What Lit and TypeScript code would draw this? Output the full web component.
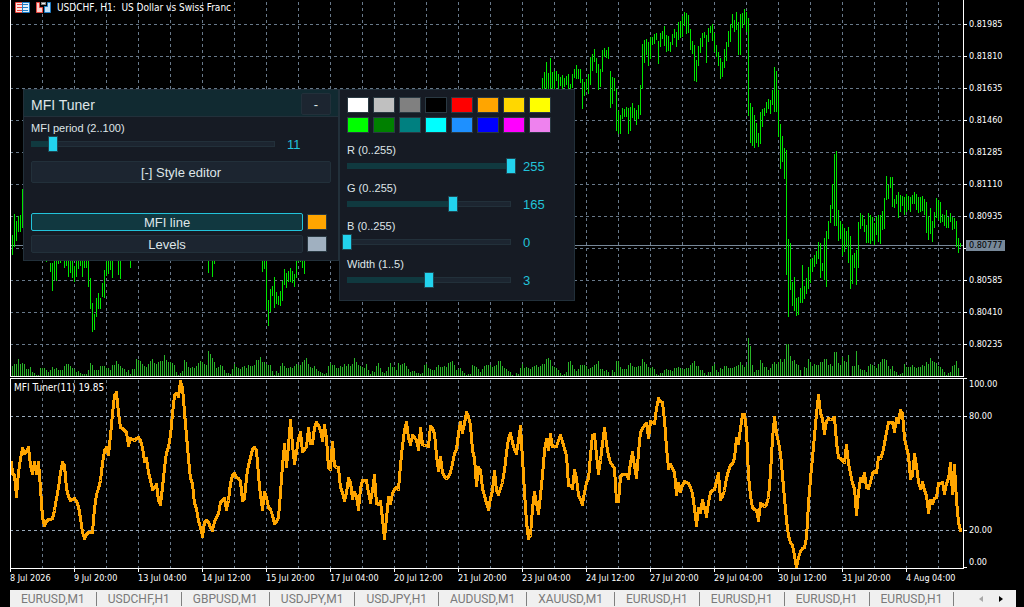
import { LitElement, html, svg, css } from "lit";
import { customElement, property, state } from "lit/decorators.js";

type Bar = [number, number];

// Runs of price bars: first x, then [high, low] for every second pixel.
const PRICE_RUNS: { x: number; bars: Bar[] }[] = [
  { x: 12, bars: [[235, 255], [214, 247], [221, 241], [216, 232], [215, 232], [189, 228]] },
  {
    x: 46,
    bars: [
      [255, 262], [255, 260], [263, 272], [263, 291], [255, 280], [261, 281], [255, 264], [255, 263], [255, 260],
      [255, 268], [255, 266], [255, 277], [255, 273], [255, 278], [266, 282], [255, 277], [255, 269], [255, 266],
      [255, 277], [255, 268], [255, 268], [255, 287], [278, 309], [303, 332], [314, 330], [298, 317], [293, 309],
      [298, 309], [283, 297], [270, 298], [255, 276], [255, 274], [255, 270], [255, 278],
    ],
  },
  { x: 118, bars: [[255, 275], [255, 279]] },
  { x: 130, bars: [[255, 268]] },
  { x: 208, bars: [[255, 273], [255, 260], [255, 277], [255, 264]] },
  {
    x: 262,
    bars: [
      [255, 272], [255, 269], [255, 310], [300, 326], [289, 312], [286, 296], [277, 308], [292, 304], [296, 305],
      [291, 306], [281, 301], [269, 285], [273, 288], [271, 282], [268, 282], [271, 283], [274, 287], [255, 278],
      [255, 262], [255, 262], [255, 268], [255, 274],
    ],
  },
  {
    x: 542,
    bars: [
      [78, 90], [72, 90], [62, 90], [73, 90], [58, 90], [72, 90], [71, 90], [71, 81], [74, 89], [77, 86], [75, 89],
      [78, 87], [76, 85], [74, 89], [84, 89], [74, 88], [69, 78], [65, 79], [69, 79], [69, 83], [79, 109], [82, 96],
      [79, 90], [74, 94], [57, 85], [54, 71], [49, 62], [58, 73], [64, 90], [69, 87], [50, 72], [48, 57], [50, 58],
      [47, 59], [71, 108], [77, 104], [78, 91], [89, 131], [111, 134], [115, 134], [108, 119], [109, 117],
      [107, 117], [108, 134], [107, 131], [103, 118], [108, 120], [110, 125], [105, 119], [85, 115], [44, 89],
      [40, 63], [39, 55], [42, 66], [37, 59], [37, 45], [34, 44], [33, 40], [41, 64], [33, 47], [31, 39], [26, 46],
      [35, 52], [36, 51], [42, 52], [34, 45], [29, 38], [32, 47], [22, 40], [21, 38], [16, 37], [12, 26], [13, 34],
      [15, 33], [29, 50], [41, 54], [45, 81], [60, 82], [46, 66], [38, 53], [33, 47], [32, 38], [35, 63], [28, 42],
      [26, 33], [24, 41], [33, 52], [45, 57], [52, 66], [58, 79], [62, 77], [49, 68], [42, 61], [31, 47], [24, 42],
      [14, 28], [20, 32], [12, 30], [22, 55], [14, 55], [13, 28], [9, 25], [12, 32], [18, 116], [103, 143],
      [107, 146], [115, 148], [123, 143], [133, 147], [112, 144], [109, 127], [108, 116], [102, 113], [99, 109],
      [100, 114], [90, 105], [67, 112], [71, 112], [90, 137], [124, 169], [136, 162], [148, 179], [150, 275],
      [239, 317], [243, 290], [282, 306], [277, 311], [298, 316], [297, 315], [288, 303], [265, 303], [286, 299],
      [278, 294], [267, 289], [259, 283], [258, 272], [255, 267], [251, 264], [242, 259], [243, 278], [263, 271],
      [238, 280], [231, 287], [221, 239], [205, 223], [184, 209], [154, 226], [151, 226], [210, 241], [221, 239],
      [224, 256], [228, 252], [231, 247], [227, 263], [236, 289], [255, 284], [253, 268], [250, 285], [222, 268],
      [213, 229], [215, 226], [219, 232], [225, 243], [213, 243], [215, 244], [217, 241], [223, 245], [217, 235],
      [215, 242], [215, 244], [211, 230], [198, 229], [176, 200], [185, 199], [177, 188], [177, 207], [199, 208],
      [195, 204], [192, 218], [195, 212], [196, 206], [197, 215], [194, 212], [196, 210], [197, 212], [195, 204],
      [192, 204], [194, 210], [197, 213], [197, 212], [196, 211], [199, 215], [202, 233], [216, 240], [208, 234],
      [221, 242], [212, 228], [198, 218], [200, 220], [202, 223], [214, 222], [215, 226], [210, 228], [217, 228],
      [213, 222], [217, 230], [218, 229], [221, 247], [238, 253], [243, 247],
    ],
  },
];

// Tick volume heights, one for every second pixel.
const VOLUME_RUNS: { x: number; heights: number[] }[] = [
  {
    x: 12,
    heights: [
      10, 12, 12, 17, 12, 13, 12, 7, 7, 9, 4, 3, 1, 1, 8, 8, 8, 6, 4, 6, 9, 7, 8, 6, 6, 6, 10, 12, 12, 10, 8, 7, 4, 5,
      3, 2, 2, 2, 6, 13, 11, 6, 6, 6, 10, 10, 10, 8, 8, 6, 11, 11, 15, 12, 10, 8, 7, 4, 6, 2, 7, 7, 17, 16, 15, 12,
      10, 9, 12, 15, 17, 13, 12, 14, 15, 15, 21, 16, 14, 14, 13, 11, 4, 1, 3, 5, 16, 14, 9, 8, 9, 8, 10, 13, 15, 14,
      12, 11, 25, 22, 18, 14, 8, 9, 11, 10, 6, 3, 3, 2, 7, 12, 9, 8, 7, 9, 10, 8, 11, 10, 10, 11, 16, 16, 19, 14, 14,
      12, 11, 11, 5, 1, 5, 3, 10, 13, 10, 8, 8, 9, 8, 10, 12, 11, 11, 14, 16, 18, 12, 9, 8, 10, 7, 5, 4, 3, 2, 3, 10,
    ],
  },
  {
    x: 330,
    heights: [
      13, 11, 11, 8, 8, 10, 9, 12, 10, 12, 10, 12, 18, 14, 11, 10, 9, 8, 12, 6, 2, 5, 4, 10, 13, 8, 4, 3, 5, 9, 13, 9,
      9, 6, 13, 11, 12, 13, 10, 7, 4, 5, 5, 3, 3, 2, 3, 11, 12, 8, 7, 6, 6, 9, 11, 9, 9, 10, 9, 13, 14, 15, 11, 6, 7,
      8, 5, 3, 1, 2, 2, 11, 10, 9, 7, 4, 7, 10, 11, 11, 11, 9, 10, 11, 15, 15, 10, 8, 7, 5, 4, 1, 0, 3, 2, 8, 12, 8,
      9, 8, 7, 9, 10, 11, 9, 10, 12, 12, 17, 18, 16, 10, 9, 8, 6, 3, 1, 2, 4, 14, 15, 11, 7, 5, 7, 11, 11, 11, 10, 7,
      8, 9, 11, 12, 15, 7, 7, 5, 6, 4, 0, 6, 4, 15, 15, 9, 7, 7, 7, 11, 13, 10, 9, 9, 10, 10, 17, 14, 12, 9, 8, 9, 7,
      2, 1, 3, 3, 6, 7, 6, 6, 5, 8, 8, 9, 8, 7, 7, 8, 8, 11, 13, 15, 10, 10, 6, 6, 3, 1, 4, 4, 10, 12, 6, 4, 8, 7, 10,
      10, 8, 8, 8, 9, 10, 11, 14, 11, 9, 11, 38, 30, 11, 4, 6, 6,
    ],
  },
  {
    x: 760,
    heights: [
      16, 13, 9, 9, 6, 8, 12, 14, 12, 14, 17, 14, 17, 32, 32, 20, 15, 16, 12, 11, 6, 0, 9, 8, 17, 14, 10, 12, 11, 11,
      14, 14, 17, 17, 11, 12, 10, 24, 24, 13, 11, 19, 15, 14, 21, 0, 10, 10, 25, 11, 7, 6, 6, 4, 10, 12, 11, 10, 8,
      12, 14, 17, 17, 16, 10, 7, 10, 5, 4, 1, 2, 3, 12, 9, 9, 9, 11, 9, 8, 9, 9, 11, 10, 14, 12, 18, 15, 14, 13, 10,
      9, 7, 4, 1, 3, 4, 10, 11, 15, 8,
    ],
  },
];

// Indicator line, window y for every second pixel from x = 12.
const MFI_LINE: number[] = [
  473, 475, 496, 472, 458, 448, 453, 451, 447, 465, 473, 462, 473, 462, 488, 517, 525, 521, 519, 519, 518, 510, 498,
  487, 472, 462, 465, 488, 496, 500, 499, 498, 501, 506, 518, 532, 538, 534, 532, 532, 532, 508, 494, 488, 480, 463,
  450, 447, 454, 435, 413, 395, 392, 413, 427, 428, 430, 432, 445, 438, 439, 440, 438, 437, 440, 447, 461, 458, 472,
  480, 489, 487, 484, 500, 504, 487, 468, 452, 447, 435, 413, 395, 393, 396, 381, 387, 412, 435, 458, 478, 483, 503,
  508, 520, 527, 536, 522, 520, 522, 527, 530, 521, 517, 513, 502, 500, 498, 509, 500, 483, 475, 473, 477, 478, 481,
  500, 498, 477, 465, 457, 449, 447, 450, 475, 495, 509, 492, 497, 507, 509, 515, 523, 521, 517, 492, 465, 444, 466,
  445, 420, 445, 463, 452, 438, 432, 451, 449, 446, 428, 443, 443, 427, 422, 425, 430, 440, 425, 438, 467, 469, 442,
  465, 467, 467, 487, 492, 500, 492, 478, 482, 498, 492, 496, 509, 488, 480, 480, 480, 492, 502, 490, 475, 503, 504,
  501, 518, 538, 518, 497, 503, 493, 489, 487, 489, 465, 445, 430, 422, 437, 444, 435, 437, 440, 449, 428, 444, 445,
  445, 446, 426, 428, 433, 455, 470, 457, 472, 476, 478, 476, 472, 463, 453, 449, 433, 422, 432, 423, 412, 416, 425,
  450, 458, 485, 467, 470, 488, 495, 503, 509, 498, 490, 471, 490, 494, 488, 482, 470, 452, 438, 433, 442, 449, 453,
  440, 426, 458, 492, 522, 538, 535, 508, 492, 503, 513, 495, 475, 450, 439, 449, 434, 446, 446, 446, 440, 435, 441,
  448, 455, 485, 485, 488, 470, 478, 495, 499, 504, 492, 482, 478, 455, 435, 434, 455, 473, 460, 443, 428, 443, 455,
  462, 465, 468, 501, 501, 476, 474, 474, 474, 478, 462, 452, 466, 477, 452, 432, 428, 425, 423, 437, 421, 422, 423,
  408, 398, 401, 402, 420, 447, 468, 464, 468, 472, 494, 483, 491, 485, 481, 482, 483, 487, 493, 508, 525, 508, 512,
  500, 507, 516, 502, 492, 490, 489, 481, 473, 499, 496, 490, 478, 470, 465, 463, 458, 438, 443, 428, 414, 414, 430,
  475, 495, 507, 509, 510, 520, 503, 504, 506, 504, 497, 473, 438, 417, 433, 442, 453, 475, 498, 520, 535, 542, 545,
  555, 567, 557, 551, 548, 547, 537, 503, 478, 457, 435, 413, 395, 413, 418, 433, 421, 418, 419, 419, 417, 442, 457,
  458, 460, 462, 445, 463, 473, 483, 488, 514, 492, 478, 481, 473, 487, 488, 482, 473, 471, 472, 457, 458, 453, 443,
  432, 422, 422, 422, 431, 418, 422, 410, 413, 438, 447, 455, 478, 475, 454, 465, 482, 488, 482, 490, 495, 512, 500,
  503, 498, 497, 483, 483, 482, 493, 483, 478, 463, 493, 465, 500, 522, 530,
];

const PRICES = [
  "0.81985", "0.81810", "0.81635", "0.81460", "0.81285", "0.81110", "0.80935", "0.80760", "0.80585", "0.80410",
  "0.80235",
];

const TIMES = [
  "8 Jul 2026", "9 Jul 20:00", "13 Jul 04:00", "14 Jul 12:00", "15 Jul 20:00", "17 Jul 04:00", "20 Jul 12:00",
  "21 Jul 20:00", "23 Jul 04:00", "24 Jul 12:00", "27 Jul 20:00", "29 Jul 04:00", "30 Jul 12:00", "31 Jul 20:00",
  "4 Aug 04:00",
];

const TABS = [
  "EURUSD,M1", "USDCHF,H1", "GBPUSD,M1", "USDJPY,M1", "USDJPY,H1", "AUDUSD,M1", "XAUUSD,M1", "EURUSD,H1",
  "EURUSD,H1", "EURUSD,H1", "EURUSD,H1",
];

const PALETTE: [string, string][] = [
  ["White", "#ffffff"], ["Silver", "#c0c0c0"], ["Gray", "#808080"], ["Black", "#000000"],
  ["Red", "#ff0000"], ["Orange", "#ffa500"], ["Gold", "#ffd700"], ["Yellow", "#ffff00"],
  ["Lime", "#00ff00"], ["Green", "#008000"], ["Teal", "#008080"], ["Aqua", "#00ffff"],
  ["Dodger blue", "#1e90ff"], ["Blue", "#0000ff"], ["Magenta", "#ff00ff"], ["Violet", "#ee82ee"],
];

const columns = Array.from({ length: 80 }, (_, i) => 31.5 + i * 32);

@customElement("price-pane")
export class PricePane extends LitElement {
  static styles = css`
    :host {
      display: block;
      position: relative;
      overflow: hidden;
      border: 1px solid #fff;
      border-top: 0;
      min-width: 0;
    }
    .plot {
      display: block;
      width: 100%;
      height: 100%;
      shape-rendering: crispEdges;
    }
    .grid { stroke: #68798a; stroke-dasharray: 3 3; }
    .rows { stroke-dashoffset: 1; }
    .columns { stroke-dashoffset: -2; }
    .bid { stroke: #778899; }
    .bars { stroke: #00e600; fill: none; }
    .volumes { stroke: #28b428; fill: none; }
    .title {
      position: absolute;
      left: 4px;
      top: 1px;
      display: flex;
      align-items: center;
      gap: 6px;
      margin: 0;
      font: 10px/13px "DejaVu Sans Condensed", "DejaVu Sans", sans-serif;
      color: #fff;
      white-space: pre;
    }
  `;

  render() {
    const bars = PRICE_RUNS.flatMap((run) => run.bars.map(([hi, lo], i) => `M${run.x + i * 2} ${hi}V${lo}`)).join("");
    const volumes = VOLUME_RUNS.flatMap((run) =>
      run.heights.map((h, i) => `M${run.x + i * 2} 376V${376 - h}`)
    ).join("");
    return html`
      <svg class="plot" role="img" aria-label="USDCHF hourly price bars">
        <g class="grid columns">${columns.map((x) => svg`<line x1=${x} x2=${x} y1="0" y2="100%"></line>`)}</g>
        <g class="grid rows">
          ${PRICES.map((_, i) => svg`<line x1="0" x2="100%" y1=${24.5 + i * 32} y2=${24.5 + i * 32}></line>`)}
        </g>
        <path class="volumes" transform="translate(-10.5 0)" d=${volumes}></path>
        <line class="bid" x1="0" x2="100%" y1="245.5" y2="245.5"></line>
        <path class="bars" transform="translate(-10.5 0)" d=${bars}></path>
      </svg>
      <h1 class="title">
        <svg width="15" height="11" viewBox="0 0 15 11" aria-hidden="true">
          <path d="M8 0H1a1 1 0 0 0-1 1v9a1 1 0 0 0 1 1h7z" fill="#e8463e" />
          <path d="M7 0h7a1 1 0 0 1 1 1v9a1 1 0 0 1-1 1H7z" fill="#1e7cc4" />
          <rect x="1" y="1" width="6" height="9" fill="#fde4e0" />
          <rect x="8" y="1" width="6" height="9" fill="#dff0fd" />
          <path d="M2 2.5h5M2 5.5h5M2 8.5h5" stroke="#e8463e" />
          <path d="M8 2.5h5M8 5.5h5M8 8.5h5" stroke="#1e7cc4" />
        </svg>
        <svg width="15" height="11" viewBox="0 0 15 11" aria-hidden="true">
          <path d="M.5 .5h3v5h3v5h-6z" fill="#fbd0cb" stroke="#e8463e" />
          <path d="M14.500 .5h-3v4h-3v6h6z" fill="#bfe2fb" stroke="#1e7cc4" />
          <path d="M5 0h5v3h-5z" fill="#8a8a8a" />
          <path d="M6 1h3v1h-3z" fill="#f0f0f0" />
        </svg><span>USDCHF, H1:  US Dollar vs Swiss Franc</span>
      </h1>
    `;
  }
}

@customElement("mfi-pane")
export class MfiPane extends LitElement {
  @property() color = "#ffa500";
  @property({ type: Number }) weight = 3;
  @property({ type: Number }) period = 11;

  static styles = css`
    :host {
      display: block;
      position: relative;
      overflow: hidden;
      border: 1px solid #fff;
      min-width: 0;
    }
    .plot {
      display: block;
      width: 100%;
      height: 100%;
      shape-rendering: crispEdges;
    }
    .grid { stroke: #68798a; stroke-dasharray: 3 3; stroke-dashoffset: -1; }
    .levels { stroke: #9aaabb; stroke-dasharray: 3 3; stroke-dashoffset: 1; }
    .line { fill: none; stroke-linejoin: round; stroke-linecap: round; }
    .title {
      position: absolute;
      left: 3px;
      top: 2px;
      margin: 0;
      font: 10px/13px "DejaVu Sans Condensed", "DejaVu Sans", sans-serif;
      color: #fff;
    }
  `;

  render() {
    const points = MFI_LINE.map((y, i) => `${12 + i * 2},${y}`).join(" ");
    return html`
      <svg class="plot" role="img" aria-label="Money flow index line">
        <g class="grid">${columns.map((x) => svg`<line x1=${x} x2=${x} y1="0" y2="100%"></line>`)}</g>
        <g class="levels">
          <line x1="0" x2="100%" y1="37.5" y2="37.5"></line>
          <line x1="0" x2="100%" y1="151.5" y2="151.5"></line>
        </g>
        <polyline
          class="line"
          transform="translate(-10.5 -378.5)"
          stroke=${this.color}
          stroke-width=${this.weight}
          points=${"11,462 " + points}
        ></polyline>
      </svg>
      <h2 class="title">MFI Tuner(${this.period}) 19.85</h2>
    `;
  }
}

@customElement("value-slider")
export class ValueSlider extends LitElement {
  @property() label = "";
  @property({ type: Number }) min = 0;
  @property({ type: Number }) max = 255;
  @property({ type: Number }) value = 0;

  static styles = css`
    :host { display: block; }
    .label {
      display: block;
      font-size: 11px;
      line-height: 14px;
      color: #dfe5e8;
    }
    .row {
      display: grid;
      grid-template-columns: minmax(0, 1fr) 44px;
      column-gap: 12px;
      height: 16px;
    }
    .slider { display: grid; align-items: center; }
    .rail, .input { grid-area: 1 / 1; }
    .rail {
      height: 6px;
      background: #1c2530;
      box-shadow: inset 0 0 0 1px #22303a;
    }
    .fill { height: 6px; background: #10393f; }
    .input {
      appearance: none;
      height: 16px;
      margin: 0 -5px;
      padding: 0;
      background: none;
      outline-offset: 2px;
      z-index: 1;
    }
    .input::-webkit-slider-thumb {
      appearance: none;
      box-sizing: border-box;
      width: 10px;
      height: 16px;
      border: 1px solid #1f4753;
      background: #22d3ee;
    }
    .value {
      padding-top: 2px;
      font-size: 13px;
      line-height: 16px;
      color: #22c3da;
    }
  `;

  private onInput(e: Event) {
    this.value = Number((e.target as HTMLInputElement).value);
    this.dispatchEvent(new CustomEvent("change-value", { detail: this.value }));
  }

  render() {
    const share = ((this.value - this.min) / (this.max - this.min)) * 100;
    return html`
      <label class="label" for="range">${this.label} (${this.min}..${this.max})</label>
      <div class="row">
        <div class="slider">
          <div class="rail"><div class="fill" style="width:${share}%"></div></div>
          <input
            class="input"
            id="range"
            type="range"
            min=${this.min}
            max=${this.max}
            .value=${String(this.value)}
            @input=${this.onInput}
          />
        </div>
        <output class="value" for="range">${this.value}</output>
      </div>
    `;
  }
}

@customElement("app-root")
export class AppRoot extends LitElement {
  @state() private period = 11;
  @state() private target = "line";
  @state() private styleOpen = true;
  @state() private collapsed = false;
  @state() private rgb = [255, 165, 0];
  @state() private weight = 3;

  static styles = css`
    :host {
      display: block;
      font-family: "Liberation Sans", Arial, sans-serif;
      background: #000;
    }
    .terminal {
      position: relative;
      display: grid;
      box-sizing: border-box;
      height: 100vh;
      padding-left: 10px;
      grid-template-columns: minmax(0, 1fr) 60px;
      grid-template-rows: minmax(0, 1fr) 191px 21px 17px;
      overflow: hidden;
      color: #fff;
    }
    .price, .prices { margin-bottom: 1px; }
    .prices, .levels, .times {
      font: 9px/12px "DejaVu Sans Condensed", "DejaVu Sans", sans-serif;
    }
    .prices {
      position: relative;
      padding-top: 8px;
    }
    .tick {
      display: flex;
      align-items: center;
      gap: 2px;
    }
    .tick::before {
      content: "";
      width: 3px;
      height: 1px;
      background: #fff;
    }
    .prices .tick { height: 32px; }
    .last {
      position: absolute;
      left: 2px;
      top: 240px;
      box-sizing: border-box;
      width: 39px;
      padding-left: 3px;
      line-height: 11px;
      background: #778899;
      color: #000;
    }
    .levels {
      display: grid;
      grid-template-rows: 32px 12px 102px 12px 32px;
    }
    .plain {
      padding-left: 5px;
      background: linear-gradient(#fff, #fff) 0 0 / 3px 1px no-repeat;
    }
    .low {
      align-self: end;
      background-position: 0 100%;
    }
    .times {
      grid-column: 1 / -1;
      display: flex;
      overflow: hidden;
    }
    .time {
      flex: none;
      width: 64px;
      display: flex;
      flex-direction: column;
      white-space: nowrap;
    }
    .time::before {
      content: "";
      width: 1px;
      height: 3px;
      background: #fff;
    }
    .tabs {
      grid-column: 1 / -1;
      display: flex;
      align-items: center;
      margin-right: 8px;
      background: #f0f0f0;
      overflow: hidden;
    }
    .tab {
      flex: none;
      height: 14px;
      padding: 0 11px;
      border: 0;
      border-right: 1px solid #808080;
      background: none;
      font: 12px/14px Roboto, sans-serif;
      color: #7a7a7a;
    }
    .scroll {
      display: flex;
      margin-left: auto;
      padding-right: 5px;
    }
    .arrow {
      display: grid;
      place-items: center;
      width: 20px;
      height: 16px;
      padding: 0;
      border: 0;
      background: none;
    }

    .floating {
      position: absolute;
      left: 23px;
      top: 89px;
      display: flex;
      align-items: flex-start;
      color: #dfe5e8;
    }
    .panel {
      box-sizing: border-box;
      border: 1px solid #22303a;
      background: #161b24;
    }
    .tuner { width: 316px; }
    .head {
      display: flex;
      align-items: center;
      justify-content: space-between;
      padding: 3px 7px 1px;
      border-bottom: 1px solid #22303a;
      background: #112a31;
    }
    .name {
      margin: 0;
      padding-top: 2px;
      font-size: 14px;
      line-height: 16px;
      font-weight: 400;
    }
    .button {
      box-sizing: border-box;
      height: 22px;
      padding: 2px 0 0;
      border: 1px solid #22303a;
      border-radius: 2px;
      background: #1c2530;
      font: 13px/16px "Liberation Sans", Arial, sans-serif;
      color: #dfe5e8;
    }
    .fold { width: 30px; }
    .body { padding: 4px 7px 7px; }
    .wide {
      display: block;
      width: 100%;
      margin: 10px 0 30px;
    }
    .targets {
      display: grid;
      grid-template-columns: minmax(0, 1fr) 20px;
      column-gap: 4px;
      row-gap: 4px;
      align-items: center;
      padding-right: 4px;
    }
    .target {
      height: 18px;
      line-height: 14px;
    }
    .active {
      border-color: #22c3da;
      background: #113840;
    }
    .swatch {
      box-sizing: border-box;
      height: 16px;
      padding: 0;
      border: 1px solid #2a3942;
    }
    .editor {
      width: 236px;
      padding: 7px 7px 13px;
    }
    .palette {
      display: grid;
      grid-template-columns: repeat(8, 22px);
      gap: 4px;
      margin-bottom: 10px;
    }
    .channels { display: grid; gap: 8px; }
  `;

  private pick(hex: string) {
    this.rgb = [1, 3, 5].map((i) => parseInt(hex.slice(i, i + 2), 16));
  }

  private setChannel(index: number, value: number) {
    this.rgb = this.rgb.map((v, i) => (i === index ? value : v));
  }

  private renderEditor() {
    return html`
      <section class="panel editor" aria-label="Style">
        <div class="palette">
          ${PALETTE.map(
            ([name, hex]) => html`<button
              class="swatch"
              aria-label=${name}
              style="background:${hex}"
              @click=${() => this.pick(hex)}
            ></button>`
          )}
        </div>
        <div class="channels">
          ${["R", "G", "B"].map(
            (name, i) => html`<value-slider
              label=${name}
              .value=${this.rgb[i]}
              @change-value=${(e: CustomEvent) => this.setChannel(i, e.detail)}
            ></value-slider>`
          )}
          <value-slider
            label="Width"
            min="1"
            max="5"
            .value=${this.weight}
            @change-value=${(e: CustomEvent) => (this.weight = e.detail)}
          ></value-slider>
        </div>
      </section>
    `;
  }

  render() {
    const color = `rgb(${this.rgb.join(",")})`;
    return html`
      <main class="terminal">
        <price-pane class="price"></price-pane>
        <div class="prices">
          ${PRICES.map((p) => html`<div class="tick">${p}</div>`)}
          <div class="last">0.80777</div>
        </div>

        <mfi-pane .color=${color} .weight=${this.weight} .period=${this.period}></mfi-pane>
        <div class="levels">
          <div class="plain">100.00</div>
          <div class="tick">80.00</div>
          <div></div>
          <div class="tick">20.00</div>
          <div class="plain low">0.00</div>
        </div>

        <div class="times">${TIMES.map((t) => html`<span class="time">${t}</span>`)}</div>

        <nav class="tabs" aria-label="Charts">
          ${TABS.map((t) => html`<button class="tab">${t}</button>`)}
          <div class="scroll">
            <button class="arrow" aria-label="Previous tabs" disabled>
              <svg width="4" height="6" viewBox="0 0 4 6"><path d="M4 0v6L0 3z" fill="#a8a8a8" /></svg>
            </button>
            <button class="arrow" aria-label="Next tabs">
              <svg width="4" height="6" viewBox="0 0 4 6"><path d="M0 0v6L4 3z" fill="#000" /></svg>
            </button>
          </div>
        </nav>

        <div class="floating">
          <section class="panel tuner" aria-label="MFI Tuner">
            <header class="head">
              <h2 class="name">MFI Tuner</h2>
              <button class="button fold" @click=${() => (this.collapsed = !this.collapsed)}>
                ${this.collapsed ? "+" : "-"}
              </button>
            </header>
            ${this.collapsed
              ? null
              : html`<div class="body">
                  <value-slider
                    label="MFI period"
                    min="2"
                    max="100"
                    .value=${this.period}
                    @change-value=${(e: CustomEvent) => (this.period = e.detail)}
                  ></value-slider>
                  <button class="button wide" @click=${() => (this.styleOpen = !this.styleOpen)}>
                    [${this.styleOpen ? "-" : "+"}] Style editor
                  </button>
                  <div class="targets">
                    <button
                      class="button target ${this.target === "line" ? "active" : ""}"
                      @click=${() => (this.target = "line")}
                    >MFI line</button>
                    <button class="swatch" aria-label="MFI line color" style="background:${color}"></button>
                    <button
                      class="button target ${this.target === "levels" ? "active" : ""}"
                      @click=${() => (this.target = "levels")}
                    >Levels</button>
                    <button class="swatch" aria-label="Levels color" style="background:#a0b0c0"></button>
                  </div>
                </div>`}
          </section>
          ${this.styleOpen && !this.collapsed ? this.renderEditor() : null}
        </div>
      </main>
    `;
  }
}
